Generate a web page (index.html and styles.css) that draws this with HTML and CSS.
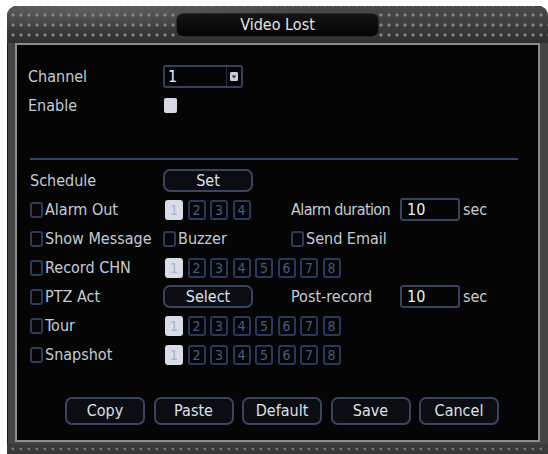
FILE: index.html
```html
<!DOCTYPE html>
<html>
<head>
<meta charset="utf-8">
<link rel="stylesheet" href="styles.css">
</head>
<body>
<div class="frame">
  <div class="header">
    <div class="title">Video Lost</div>
  </div>
  <div class="body">
    <div class="panel">
      <div class="top">
        <div class="trow">
          <span class="lbl">Channel</span>
          <div class="select"><span class="sval">1</span><span class="sarrow"><svg width="8" height="9" viewBox="0 0 8 9"><rect x="0" y="0" width="8" height="9" rx="1.5" fill="#c9ced8"/><path d="M1.5 3.5 L6.5 3.5 L4 6.5 Z" fill="#2a3040"/></svg></span></div>
        </div>
        <div class="trow enable">
          <span class="lbl">Enable</span>
          <span class="bigcheck"></span>
        </div>
      </div>
      <div class="sep"></div>
      <div class="rows">
        <div class="row">
          <span class="lbl">Schedule</span>
          <button class="btn small">Set</button>
        </div>
        <div class="row">
          <span class="chk"><i class="cb"></i>Alarm Out</span>
          <span class="boxes"><b class="on">1</b><b>2</b><b>3</b><b>4</b></span>
          <span class="lbl tight">Alarm duration</span>
          <span class="input">10</span>
          <span class="unit">sec</span>
        </div>
        <div class="row">
          <span class="chk"><i class="cb"></i>Show Message</span>
          <span class="chk"><i class="cb"></i>Buzzer</span>
          <span class="chk span3"><i class="cb"></i>Send Email</span>
        </div>
        <div class="row">
          <span class="chk"><i class="cb"></i>Record CHN</span>
          <span class="boxes wide"><b class="on">1</b><b>2</b><b>3</b><b>4</b><b>5</b><b>6</b><b>7</b><b>8</b></span>
        </div>
        <div class="row">
          <span class="chk"><i class="cb"></i>PTZ Act</span>
          <button class="btn small">Select</button>
          <span class="lbl">Post-record</span>
          <span class="input">10</span>
          <span class="unit">sec</span>
        </div>
        <div class="row">
          <span class="chk"><i class="cb"></i>Tour</span>
          <span class="boxes wide"><b class="on">1</b><b>2</b><b>3</b><b>4</b><b>5</b><b>6</b><b>7</b><b>8</b></span>
        </div>
        <div class="row">
          <span class="chk"><i class="cb"></i>Snapshot</span>
          <span class="boxes wide"><b class="on">1</b><b>2</b><b>3</b><b>4</b><b>5</b><b>6</b><b>7</b><b>8</b></span>
        </div>
      </div>
      <div class="actions">
        <button class="btn act">Copy</button>
        <button class="btn act">Paste</button>
        <button class="btn act">Default</button>
        <button class="btn act">Save</button>
        <button class="btn act">Cancel</button>
      </div>
    </div>
  </div>
  <div class="footer"></div>
</div>
</body>
</html>
```

FILE: styles.css
```css
html, body {
  margin: 0;
  padding: 0;
  background: #ffffff;
}
body {
  font-family: "DejaVu Sans Condensed", "DejaVu Sans", sans-serif;
  font-size: 16px;
  color: #c4ccd6;
}
.frame {
  margin: 6px 0 0 7px;
  width: 541px;
  height: 448px;
  background: #444444;
  border-radius: 10px 10px 0 0;
  box-shadow: inset 1px 1px 0 #1e1e1e;
  overflow: hidden;
  display: flex;
  flex-direction: column;
}
.header {
  height: 37px;
  flex: none;
  display: flex;
  justify-content: center;
  background-color: #3c3c3c;
  background-image:
    radial-gradient(circle, #858585 0 1.2px, transparent 2px),
    radial-gradient(ellipse 60% 90% at 15% 10%, rgba(255,255,255,0.12), transparent 70%),
    linear-gradient(#4a4a4a, #2f2f2f);
  background-size: 8px 10px, 100% 100%, 100% 100%;
  background-position: 2px 4px, 0 0, 0 0;
}
.title {
  margin-top: 7px;
  width: 203px;
  height: 24px;
  box-sizing: border-box;
  background: linear-gradient(#141414, #030303);
  border: 1px solid #2a2a2a;
  border-radius: 7px;
  color: #e4e4e4;
  font-size: 16px;
  line-height: 22px;
  text-align: center;
}
.body {
  flex: none;
  padding: 0 8px;
}
.panel {
  box-sizing: border-box;
  width: 525px;
  height: 399px;
  border: 2px solid #8c8c8c;
  background: #050505;
}
.footer {
  flex: 1;
  margin-top: 2px;
  background-color: #3a3a3a;
  background-image: radial-gradient(circle, #7a7a7a 0 1px, transparent 1.7px);
  background-size: 8px 10px;
  background-position: 2px 0px;
}
.top {
  padding: 20px 0 0 11px;
}
.trow {
  display: grid;
  grid-template-columns: 135px auto;
  align-items: center;
  height: 23px;
}
.trow.enable {
  margin-top: 8px;
  height: 15px;
}
.lbl {
  white-space: nowrap;
}
.lbl.tight {
  letter-spacing: -0.6px;
}
.select {
  box-sizing: border-box;
  width: 80px;
  height: 23px;
  border: 2px solid #34405c;
  border-radius: 3px;
  display: flex;
  align-items: center;
  justify-content: space-between;
  padding: 0 3px 0 3px;
  color: #eef0f4;
}
.sarrow {
  display: flex;
  align-items: center;
  height: 100%;
  padding-left: 3px;
  border-left: 1px solid #26304a;
}
.bigcheck {
  display: block;
  width: 13px;
  height: 15px;
  margin-left: 1px;
  background: #d6dae3;
  border-radius: 2px;
}
.sep {
  margin: 47px 0 0 13px;
  width: 488px;
  height: 2px;
  background: #32476a;
}
.rows {
  margin-top: 6px;
  padding-left: 13px;
}
.row {
  display: grid;
  grid-template-columns: 133px 128px 109px 60px auto;
  align-items: center;
  height: 29px;
}
.chk {
  display: flex;
  align-items: center;
  white-space: nowrap;
}
.chk.span3 {
  grid-column: 3 / span 3;
}
.cb {
  display: block;
  box-sizing: border-box;
  width: 13px;
  height: 16px;
  margin-right: 2px;
  border: 2px solid #2d3b58;
  border-radius: 3px;
}
.boxes {
  display: flex;
  gap: 4.5px;
  margin-left: 2px;
}
.boxes.wide {
  grid-column: 2 / span 4;
}
.boxes b {
  box-sizing: border-box;
  width: 18px;
  height: 20px;
  border: 2px solid #27395e;
  border-radius: 3px;
  font-weight: normal;
  font-size: 14px;
  line-height: 16px;
  text-align: center;
  color: #445c84;
}
.boxes b.on {
  background: #d9dde7;
  border-color: #d9dde7;
  color: #aab2c4;
}
.btn {
  font-family: "DejaVu Sans Condensed", "DejaVu Sans", sans-serif;
  font-size: 16px;
  color: #dde1e8;
  background: #0b0d13;
  border: 2px solid #39455f;
  border-radius: 7px;
  padding: 0;
  margin: 0;
}
.btn.small {
  width: 90px;
  height: 23px;
  line-height: 19px;
}
.input {
  box-sizing: border-box;
  width: 60px;
  height: 23px;
  border: 2px solid #37425e;
  border-radius: 3px;
  padding-left: 5px;
  line-height: 19px;
  color: #eef0f4;
}
.unit {
  padding-left: 3px;
}
.actions {
  margin-top: 28px;
  padding-left: 48px;
  display: flex;
  gap: 8.5px;
}
.btn.act {
  width: 80px;
  height: 28px;
  line-height: 24px;
}
```
